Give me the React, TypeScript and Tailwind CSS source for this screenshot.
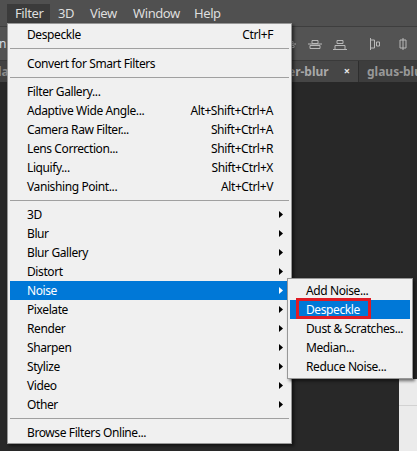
import React from "react";

type Item =
  | { kind: "sep" }
  | { kind: "item"; label: string; shortcut?: string; sub?: boolean; active?: boolean };

const filterItems: Item[] = [
  { kind: "item", label: "Despeckle", shortcut: "Ctrl+F" },
  { kind: "sep" },
  { kind: "item", label: "Convert for Smart Filters" },
  { kind: "sep" },
  { kind: "item", label: "Filter Gallery..." },
  { kind: "item", label: "Adaptive Wide Angle...", shortcut: "Alt+Shift+Ctrl+A" },
  { kind: "item", label: "Camera Raw Filter...", shortcut: "Shift+Ctrl+A" },
  { kind: "item", label: "Lens Correction...", shortcut: "Shift+Ctrl+R" },
  { kind: "item", label: "Liquify...", shortcut: "Shift+Ctrl+X" },
  { kind: "item", label: "Vanishing Point...", shortcut: "Alt+Ctrl+V" },
  { kind: "sep" },
  { kind: "item", label: "3D", sub: true },
  { kind: "item", label: "Blur", sub: true },
  { kind: "item", label: "Blur Gallery", sub: true },
  { kind: "item", label: "Distort", sub: true },
  { kind: "item", label: "Noise", sub: true, active: true },
  { kind: "item", label: "Pixelate", sub: true },
  { kind: "item", label: "Render", sub: true },
  { kind: "item", label: "Sharpen", sub: true },
  { kind: "item", label: "Stylize", sub: true },
  { kind: "item", label: "Video", sub: true },
  { kind: "item", label: "Other", sub: true },
  { kind: "sep" },
  { kind: "item", label: "Browse Filters Online..." },
];

const noiseItems = ["Add Noise...", "Despeckle", "Dust & Scratches...", "Median...", "Reduce Noise..."];

const font = { fontFamily: '"Noto Sans", "Open Sans", Arial, sans-serif' };

const Arrow = ({ white }: { white?: boolean }) => (
  <svg width="4" height="7" viewBox="0 0 4 7" className="ml-[6px]">
    <path d="M0 0 L4 3.5 L0 7 Z" fill={white ? "#ffffff" : "#000000"} />
  </svg>
);

const AlignIcon = ({ d, className }: { d: string; className?: string }) => (
  <svg width="16" height="14" viewBox="0 0 16 14" fill="none" stroke="#b9b9b9" strokeWidth="1" className={className}>
    <path d={d} />
  </svg>
);

const App = () => {
  return (
    <div className="relative w-[417px] h-[451px] overflow-hidden bg-[#282828] select-none" style={font}>
      {/* menu bar */}
      <div className="h-[27px] bg-[#505050] border-b border-[#3e3e3e] flex items-start pt-[4px] text-[13px] text-[#dedede] tracking-[-0.4px] whitespace-nowrap">
        <div className="ml-[7px] w-[43px] h-[19px] bg-[#3b3b3b] pl-[8px] leading-[19px]">Filter</div>
        <span className="ml-[8px] w-[32px] leading-[19px]">3D</span>
        <span className="w-[43px] leading-[19px]">View</span>
        <span className="w-[61px] leading-[19px]">Window</span>
        <span className="leading-[19px]">Help</span>
      </div>

      {/* options bar */}
      <div className="h-[34px] bg-[#535353] border-b border-[#3a3a3a] flex items-center text-[12px] text-[#d6dde6]">
        <span className="-ml-[1px]">n</span>
        <div className="ml-auto flex items-center pr-[6px]">
          <AlignIcon d="M1 7 H15 M4 4.5 H12 V6.5 H4 Z M3 8.5 H13 V10.5 H3 Z" />
          <AlignIcon className="ml-[10px]" d="M1 7 H15 M5 3.5 H11 V6.5 H5 Z M3 8.5 H13 V11.5 H3 Z" />
          <AlignIcon className="ml-[9px]" d="M1 12.5 H15 M5 3.5 H11 V6.5 H5 Z M3 8.5 H13 V12.5 H3 Z" />
          <AlignIcon className="ml-[20px]" d="M2.5 1 V13 M2.5 3 H6.5 V11 H2.5 M8.5 5 H11.5 V9 H8.5 Z" />
          <AlignIcon className="ml-[11px]" d="M8 1 V13 M5 3 H11 V11 H5 Z" />
        </div>
      </div>

      {/* document tabs */}
      <div className="h-[21px] bg-[#424242] flex items-center text-[12px] font-bold">
        <span className="-ml-[2px] text-[#8a8a8a]">la</span>
        <div className="ml-auto flex items-center h-full">
          <div className="h-full flex items-center bg-[#464646] pr-[8px]">
            <span className="text-[#a9a9a9]">ter-blur</span>
            <span className="ml-[15px] text-[11px] text-[#e6e6e6]">×</span>
          </div>
          <div className="h-full w-[1px] bg-[#2e2e2e]" />
          <div className="h-full flex items-center pl-[8px] bg-[#3d3d3d] text-[#989898] whitespace-nowrap w-[58px] overflow-hidden">
            glaus-blur
          </div>
        </div>
      </div>

      {/* document area */}
      <div className="flex h-[369px]">
        <div className="flex-1 bg-[#282828]" />
        <div className="w-[18px] flex flex-col">
          <div className="h-[297px] bg-[#282828]" />
          <div className="flex-1 bg-[#ebebeb] flex flex-col">
            <div className="h-[27px] border-b border-[#d2d2d2]" />
          </div>
        </div>
      </div>

      {/* Filter dropdown */}
      <div className="absolute left-[7px] top-[23px] w-[285px] bg-[#f0f0f0] border border-[#979797] py-[1px] text-[12px] text-black tracking-[-0.4px] shadow-[2px_2px_3px_rgba(0,0,0,0.55)]">
        {filterItems.map((it, i) =>
          it.kind === "sep" ? (
            <div key={i} className={i === 1 ? "h-[10px] pt-[4px] mx-[2px]" : "h-[9px] pt-[4px] mx-[2px]"}>
              <div className="h-[1px] bg-[#a0a0a0]" />
            </div>
          ) : (
            <div
              key={i}
              className={
                "h-[19px] mx-[2px] pl-[17px] flex items-center leading-[19px] " +
                (it.active ? "bg-[#0078d7] text-white" : "")
              }
            >
              <span className="flex-1 whitespace-nowrap">{it.label}</span>
              {it.shortcut && <span className="whitespace-nowrap">{it.shortcut}</span>}
              <div className="w-[16px] flex items-center">{it.sub && <Arrow white={it.active} />}</div>
            </div>
          )
        )}
      </div>

      {/* Noise submenu */}
      <div className="absolute left-[287px] top-[278px] w-[126px] bg-[#f0f0f0] border border-[#979797] py-[2px] text-[12px] text-black tracking-[-0.4px] shadow-[2px_2px_3px_rgba(0,0,0,0.55)]">
        {noiseItems.map((label) => (
          <div
            key={label}
            className={
              "relative h-[19px] mx-[2px] pl-[16px] flex items-center leading-[19px] whitespace-nowrap " +
              (label === "Despeckle" ? "bg-[#0078d7] text-white" : "")
            }
          >
            {label}
            {label === "Despeckle" && (
              <div className="absolute left-[6px] top-[-2px] w-[75px] h-[21px] border-[3px] border-[#e01b24]" />
            )}
          </div>
        ))}
      </div>
    </div>
  );
};

export default App;
